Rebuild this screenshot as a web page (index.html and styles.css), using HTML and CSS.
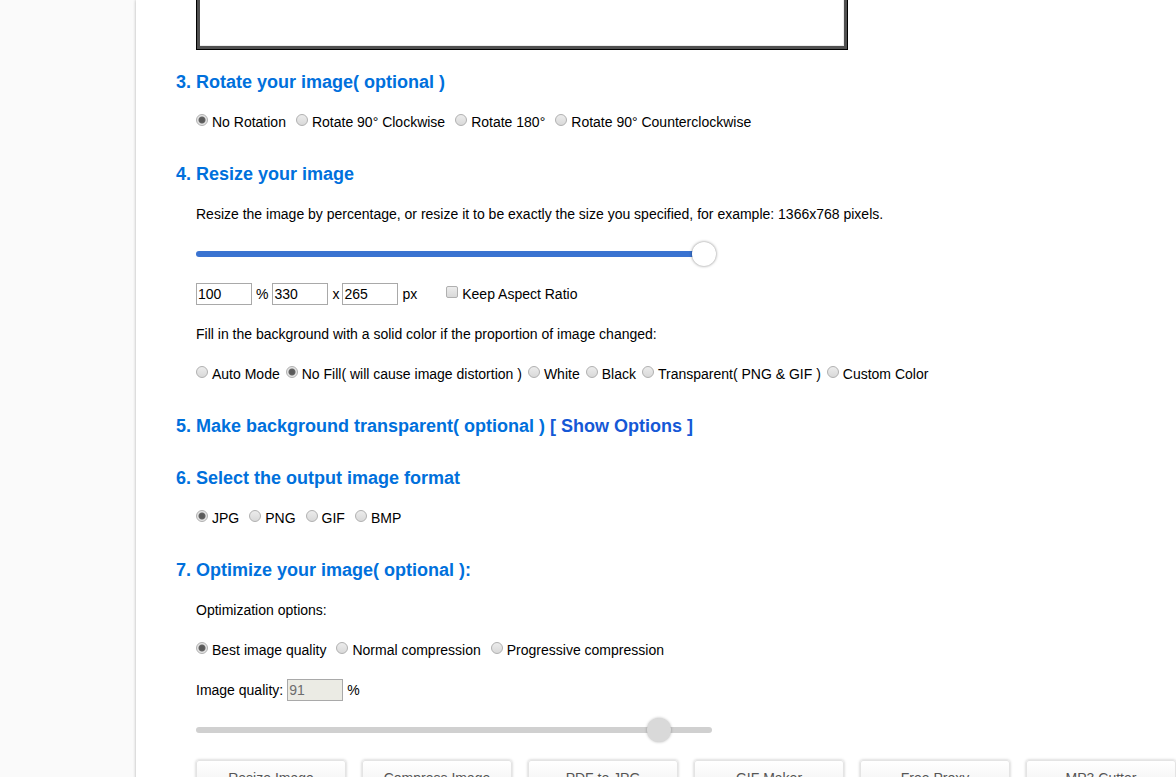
FILE: index.html
```
<!DOCTYPE html>
<html lang="en">
<head>
<meta charset="utf-8">
<title>Resize Image</title>
<link rel="stylesheet" href="styles.css">
</head>
<body>
<main class="panel">
  <form class="tool">
    <div class="preview"></div>

    <h2>3. Rotate your image( optional )</h2>
    <div class="row options">
      <label><input type="radio" name="rotate" checked>No Rotation</label>
      <label><input type="radio" name="rotate">Rotate 90° Clockwise</label>
      <label><input type="radio" name="rotate">Rotate 180°</label>
      <label><input type="radio" name="rotate">Rotate 90° Counterclockwise</label>
    </div>

    <h2>4. Resize your image</h2>
    <p class="row">Resize the image by percentage, or resize it to be exactly the size you specified, for example: 1366x768 pixels.</p>
    <div class="row">
      <div class="slider slider-active"><input type="range" min="0" max="100" value="100" aria-label="Resize percentage"></div>
    </div>
    <div class="row size">
      <input class="field" id="percent" type="text" value="100"><label for="percent">%</label>
      <input class="field" id="width" type="text" value="330" aria-label="Width"><label class="times" for="height">x</label>
      <input class="field" id="height" type="text" value="265"><label for="height">px</label>
      <label class="aspect"><input type="checkbox">Keep Aspect Ratio</label>
    </div>
    <p class="row">Fill in the background with a solid color if the proportion of image changed:</p>
    <div class="row options options-tight">
      <label><input type="radio" name="fill">Auto Mode</label>
      <label><input type="radio" name="fill" checked>No Fill( will cause image distortion )</label>
      <label><input type="radio" name="fill">White</label>
      <label><input type="radio" name="fill">Black</label>
      <label><input type="radio" name="fill">Transparent( PNG &amp; GIF )</label>
      <label><input type="radio" name="fill">Custom Color</label>
    </div>

    <h2>5. Make background transparent( optional ) <a href="#options">[ Show Options ]</a></h2>

    <h2>6. Select the output image format</h2>
    <div class="row options">
      <label><input type="radio" name="format" checked>JPG</label>
      <label><input type="radio" name="format">PNG</label>
      <label><input type="radio" name="format">GIF</label>
      <label><input type="radio" name="format">BMP</label>
    </div>

    <h2>7. Optimize your image( optional ):</h2>
    <p class="row">Optimization options:</p>
    <div class="row options">
      <label><input type="radio" name="quality" checked>Best image quality</label>
      <label><input type="radio" name="quality">Normal compression</label>
      <label><input type="radio" name="quality">Progressive compression</label>
    </div>
    <div class="row size">
      <label for="amount">Image quality:</label><input class="field" id="amount" type="text" value="91" disabled><span>%</span>
    </div>
    <div class="row">
      <div class="slider"><input type="range" min="0" max="100" value="91" disabled aria-label="Image quality"></div>
    </div>

    <div class="row tools">
      <button type="button">Resize Image</button>
      <button type="button">Compress Image</button>
      <button type="button">PDF to JPG</button>
      <button type="button">GIF Maker</button>
      <button type="button">Free Proxy</button>
      <button type="button">MP3 Cutter</button>
    </div>
  </form>
</main>
</body>
</html>
```
FILE: styles.css
```
* {
  box-sizing: border-box;
}

body {
  margin: 0;
  height: 100vh;
  overflow: hidden;
  background: #fafafa;
  color: #000;
  font: 14px/20px "Liberation Sans", Arial, sans-serif;
}

.panel {
  min-height: 100vh;
  margin-left: 136px;
  padding-left: 40px;
  background: #fff;
  box-shadow: 0 0 3px rgba(0, 0, 0, 0.3);
}

.preview {
  max-width: 652px;
  height: 50px;
  margin: 0 20px 22px;
  border: 1px solid #000;
  border-top: 0;
  background: #fff;
  box-shadow: inset 3px 0 #505050, inset -3px -3px #505050, inset -4px -4px #ececec;
}

h2 {
  margin: 32px 0 20px;
  color: #0070dc;
  font-size: 18px;
  line-height: 20px;
}

.preview + h2 {
  margin-top: 0;
}

h2 a {
  color: #1558d6;
  text-decoration: none;
}

.row {
  min-height: 20px;
  margin: 20px 0 20px 20px;
}

.options {
  display: flex;
  flex-wrap: wrap;
  gap: 0 10px;
}

.options-tight {
  gap: 0 6px;
}

label {
  display: inline-flex;
}

input[type="radio"],
input[type="checkbox"] {
  appearance: none;
  width: 12px;
  height: 12px;
  margin: 2px 4px 0 0;
  border: 1px solid #b0b0b0;
  border-radius: 50%;
  background: linear-gradient(#ececec, #d9d9d9);
}

input[type="checkbox"] {
  border-radius: 2px;
}

input[type="radio"]:checked {
  background: radial-gradient(circle, #5a5a5a 0 2px, #666 3px, #e4e4e4 4px);
}

.size {
  display: flex;
  align-items: center;
  gap: 4px;
}

.field {
  width: 56px;
  height: 22px;
  margin: -1px 0;
  padding: 1px;
  border: 1px solid #a9a9a9;
  background: #fff;
  color: #000;
  font: inherit;
}

.field:disabled {
  background: #ebebe4;
  color: #6d6d6d;
}

.times {
  margin-right: -1px;
}

.aspect {
  margin-left: 25px;
}

.row .slider {
  display: flex;
  align-items: center;
  max-width: 516px;
  height: 6px;
  border-radius: 3px;
  background: #d0d0d0;
}

.row:has(.slider) {
  padding-top: 7px;
}

.row .slider-active {
  background: #3a73d1;
}

input[type="range"] {
  flex: none;
  appearance: none;
  width: calc(100% + 4px);
  height: 24px;
  margin: 0;
  background: none;
}

input[type="range"]::-webkit-slider-thumb {
  appearance: none;
  width: 24px;
  height: 24px;
  border-radius: 50%;
  background: #fff;
  box-shadow: 0 0 3px rgba(0, 0, 0, 0.5);
}

input[type="range"]:disabled::-webkit-slider-thumb {
  background: #d9d9d9;
  box-shadow: 0 0 3px rgba(0, 0, 0, 0.3);
}

.tools {
  display: flex;
  gap: 16px;
}

button {
  flex: 0 0 150px;
  height: 36px;
  padding: 0;
  border: 1px solid #e4e4e4;
  border-radius: 3px;
  background: linear-gradient(#fff, #efefef);
  box-shadow: 0 0 3px rgba(0, 0, 0, 0.25);
  color: #555;
  font: inherit;
}
```
